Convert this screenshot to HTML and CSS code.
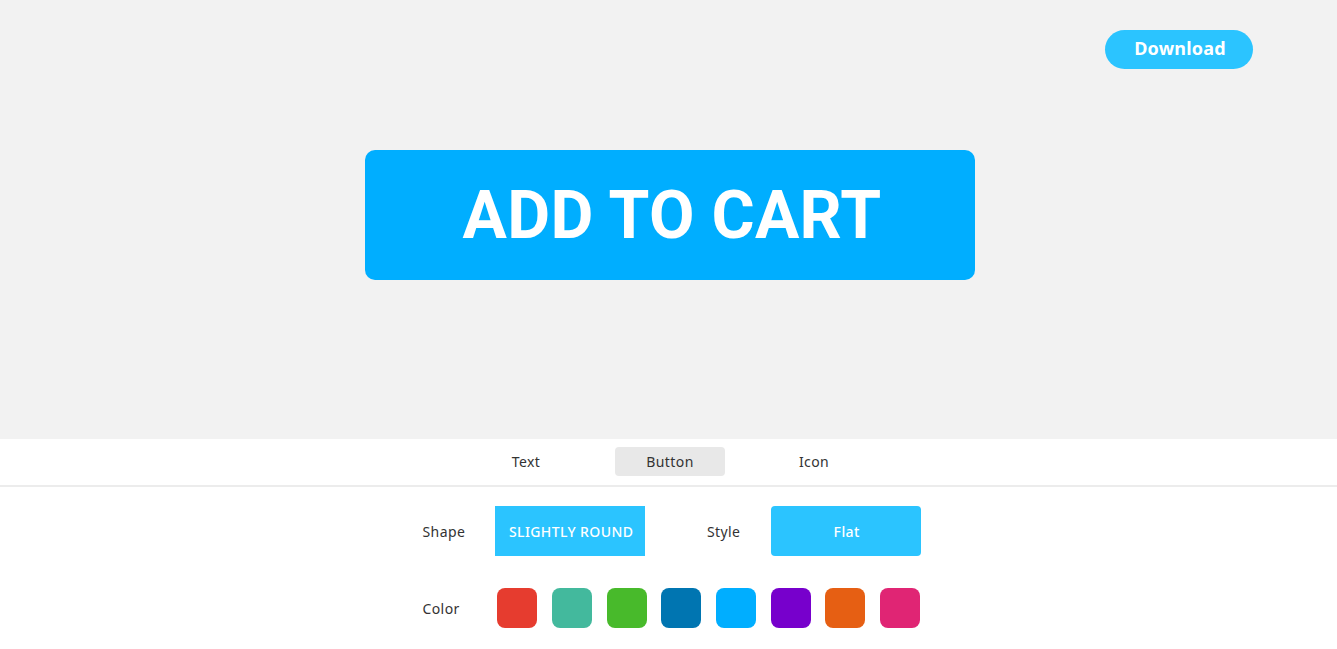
FILE: index.html
```html
<!DOCTYPE html>
<html lang="en">

<head>
    <meta charset="UTF-8">
    <meta name="viewport" content="width=device-width, initial-scale=1.0">
    <title>Button Maker</title>
    <link rel="stylesheet" href="styles.css">
</head>

<body>
    <div class="stage">
        <div class="topbar">
            <button class="download-btn">Download</button>
        </div>
        <div class="preview">
            <button class="cart-btn">ADD TO CART</button>
        </div>
    </div>

    <div class="panel">
        <nav class="tabs">
            <span class="tab">Text</span>
            <span class="tab active">Button</span>
            <span class="tab">Icon</span>
        </nav>

        <div class="options">
            <div class="row">
                <span class="label">Shape</span>
                <button class="choice square">SLIGHTLY ROUND</button>
                <span class="label second">Style</span>
                <button class="choice rounded">Flat</button>
            </div>
            <div class="row colors">
                <span class="label">Color</span>
                <span class="swatch" style="background-color: #e63c2f;"></span>
                <span class="swatch" style="background-color: #43b99d;"></span>
                <span class="swatch" style="background-color: #48ba2b;"></span>
                <span class="swatch" style="background-color: #0075b1;"></span>
                <span class="swatch" style="background-color: #00aeff;"></span>
                <span class="swatch" style="background-color: #7700cc;"></span>
                <span class="swatch" style="background-color: #e65f13;"></span>
                <span class="swatch" style="background-color: #e02574;"></span>
            </div>
        </div>
    </div>
</body>

</html>
```

FILE: styles.css
```css
body {
    font-family: 'Noto Sans', 'Open Sans', sans-serif;
    background-color: #fff;
    margin: 0;
    padding: 0;
    color: #333;
}

button {
    font-family: inherit;
    border: none;
    cursor: pointer;
}

.stage {
    background-color: #f2f2f2;
    height: 439px;
}

.topbar {
    display: flex;
    justify-content: flex-end;
    padding: 30px 84px 0 0;
}

.download-btn {
    background-color: #2bc4ff;
    color: #fff;
    font-size: 18px;
    font-weight: bold;
    letter-spacing: 0.2px;
    width: 148px;
    height: 39px;
    padding: 0 0 4px 2px;
    border-radius: 20px;
}

.preview {
    display: flex;
    justify-content: center;
    padding: 81px 0 0 3px;
}

.cart-btn {
    font-family: 'Roboto', sans-serif;
    background-color: #00aeff;
    color: #fff;
    font-size: 66px;
    font-weight: bold;
    letter-spacing: 0.3px;
    width: 610px;
    height: 130px;
    border-radius: 10px;
    padding: 0 0 0 4px;
}

.panel {
    background-color: #fff;
}

.tabs {
    display: flex;
    justify-content: center;
    gap: 34px;
    padding: 8px 0 9px 3px;
    border-bottom: 2px solid #ececec;
}

.tab {
    width: 110px;
    height: 29px;
    line-height: 29px;
    text-align: center;
    font-size: 14px;
    letter-spacing: 0.4px;
    border-radius: 4px;
}

.tab.active {
    background-color: #e8e8e8;
}

.options {
    width: 498px;
    margin: 0 auto;
    padding: 19px 0 21px 6px;
}

.row {
    display: flex;
    align-items: center;
}

.label {
    width: 73px;
    font-size: 14px;
    letter-spacing: 0.4px;
}

.label.second {
    width: 64px;
    margin-left: 62px;
}

.choice {
    width: 150px;
    height: 50px;
    background-color: #2bc4ff;
    color: #fff;
    font-size: 14px;
    font-weight: 500;
    letter-spacing: 0.4px;
    padding: 0 0 0 2px;
}

.square {
    border-radius: 0;
}

.rounded {
    border-radius: 4px;
}

.colors {
    margin-top: 32px;
    gap: 14.7px;
}

.colors .label {
    margin-right: -13px;
}

.swatch {
    width: 40px;
    height: 40px;
    border-radius: 8px;
}
```
